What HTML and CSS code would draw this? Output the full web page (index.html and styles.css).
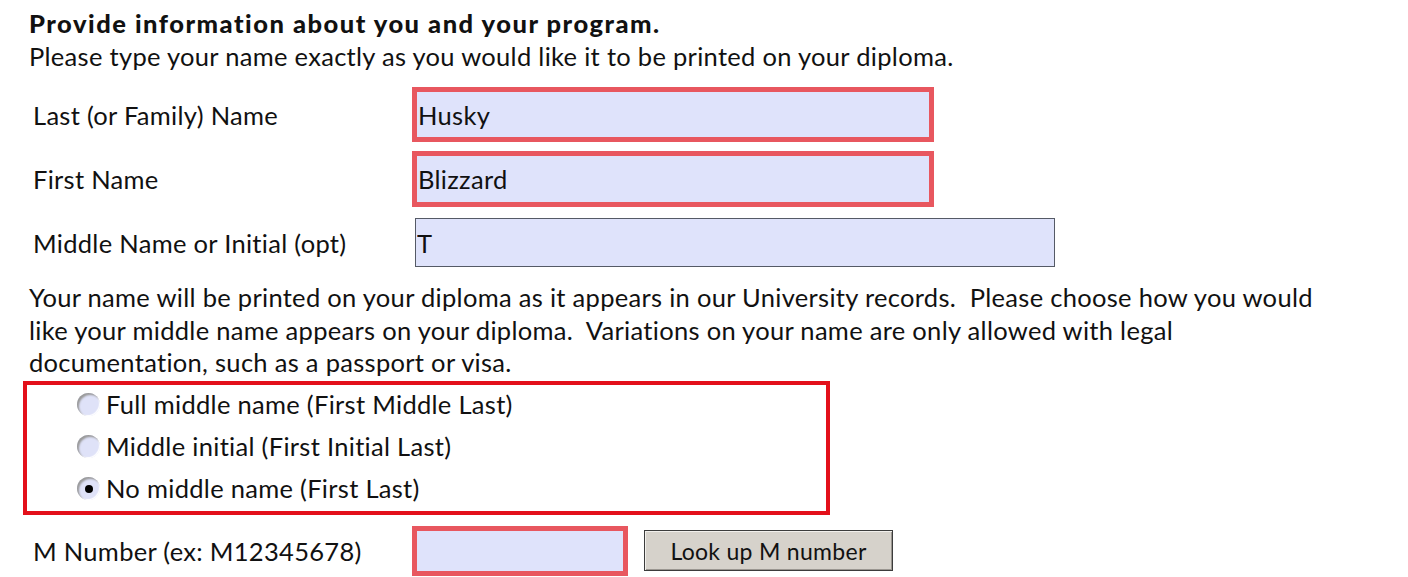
FILE: index.html
```html
<!DOCTYPE html>
<html lang="en">
<head>
    <meta charset="UTF-8">
    <meta name="viewport" content="width=device-width, initial-scale=1.0">
    <title>Diploma Name</title>
    <link rel="stylesheet" href="styles.css">
</head>
<body>
    <div class="page">
        <h2>Provide information about you and your program.</h2>
        <p class="intro">Please type your name exactly as you would like it to be printed on your diploma.</p>

        <div class="fields">
            <div class="row row-last">
                <label for="last">Last (or Family) Name</label>
                <input type="text" id="last" class="field required" value="Husky">
            </div>
            <div class="row row-first">
                <label for="first">First Name</label>
                <input type="text" id="first" class="field required" value="Blizzard">
            </div>
            <div class="row row-middle">
                <label for="middle">Middle Name or Initial (opt)</label>
                <input type="text" id="middle" class="field wide" value="T">
            </div>
        </div>

        <p class="note">Your name will be printed on your diploma as it appears in our University records.&nbsp; Please choose how you would<br>like your middle name appears on your diploma.&nbsp; Variations on your name are only allowed with legal<br>documentation, such as a passport or visa.</p>

        <div class="choices">
            <label class="choice"><input type="radio" name="middlename" value="full"> Full middle name (First Middle Last)</label>
            <label class="choice"><input type="radio" name="middlename" value="initial"> Middle initial (First Initial Last)</label>
            <label class="choice"><input type="radio" name="middlename" value="none" checked> No middle name (First Last)</label>
        </div>

        <div class="row row-mnum">
            <label for="mnum">M Number (ex: M12345678)</label>
            <div class="mnum-wrap">
                <input type="text" id="mnum" class="field required short" value="">
                <button type="button" class="lookup">Look up M number</button>
            </div>
        </div>
    </div>
</body>
</html>
```

FILE: styles.css
```css
body {
    margin: 0;
    background: #fff;
    color: #111;
    font-family: Lato, "Open Sans", sans-serif;
    font-size: 25.5px;
    letter-spacing: 0.3px;
}
.page {
    padding: 7px 0 0 29px;
}
h2 {
    margin: 0;
    font-size: 25.5px;
    line-height: 33px;
    font-weight: 900;
    letter-spacing: 1.5px;
}
p {
    margin: 0;
    line-height: 33px;
}
.fields {
    margin-top: 14px;
}
.row {
    display: grid;
    grid-template-columns: 383px auto;
    align-items: center;
}
.row label {
    padding-left: 4px;
}
.row-last {
    height: 55px;
    margin-bottom: 9px;
}
.row-first {
    height: 56px;
    margin-bottom: 11px;
}
.row-middle {
    height: 49px;
}
.field {
    box-sizing: border-box;
    height: 100%;
    font-family: Lato, "Open Sans", sans-serif;
    font-size: 25.5px;
    letter-spacing: 0.3px;
    color: #111;
    background: #dfe3fb;
    padding: 0 1px;
    margin: 0;
    outline: none;
}
.required {
    width: 522px;
    border: 5px solid #e8575f;
}
.wide {
    width: 640px;
    margin-left: 3px;
    border: 1px solid #555a66;
}
.note {
    margin-top: 14px;
    line-height: 32.5px;
}
.choices {
    margin: 2px 0 0 -6px;
    width: 807px;
    border: 4px solid #e3101a;
    padding-left: 50px;
    box-sizing: border-box;
}
.choice {
    display: flex;
    align-items: center;
    height: 42px;
    gap: 6px;
    margin-top: -2px;
    margin-bottom: 2px;
}
.choice input {
    appearance: none;
    -webkit-appearance: none;
    width: 23px;
    height: 23px;
    margin: 2px 0 0;
    border-radius: 50%;
    background: #dfe2f8;
    box-shadow: inset 2px 2px 2px #9a9a9a, inset -1px -1px 1px #ffffff;
    display: grid;
    place-items: center;
}
.choice input:checked::after {
    content: "";
    width: 8px;
    height: 8px;
    border-radius: 50%;
    background: #000;
}
.row-mnum {
    margin-top: 11px;
    height: 50px;
}
.mnum-wrap {
    display: flex;
    align-items: center;
    gap: 16px;
    height: 100%;
}
.short {
    width: 216px;
}
.lookup {
    height: 41px;
    width: 249px;
    font-family: Lato, "Open Sans", sans-serif;
    font-size: 23px;
    letter-spacing: 0.3px;
    color: #111;
    background: #d6d2cb;
    border: 1px solid #3c3c3c;
    box-shadow: inset 1px 1px 0 #f2f0ec, inset -1px -1px 0 #9a9690;
    padding: 0;
}
```
